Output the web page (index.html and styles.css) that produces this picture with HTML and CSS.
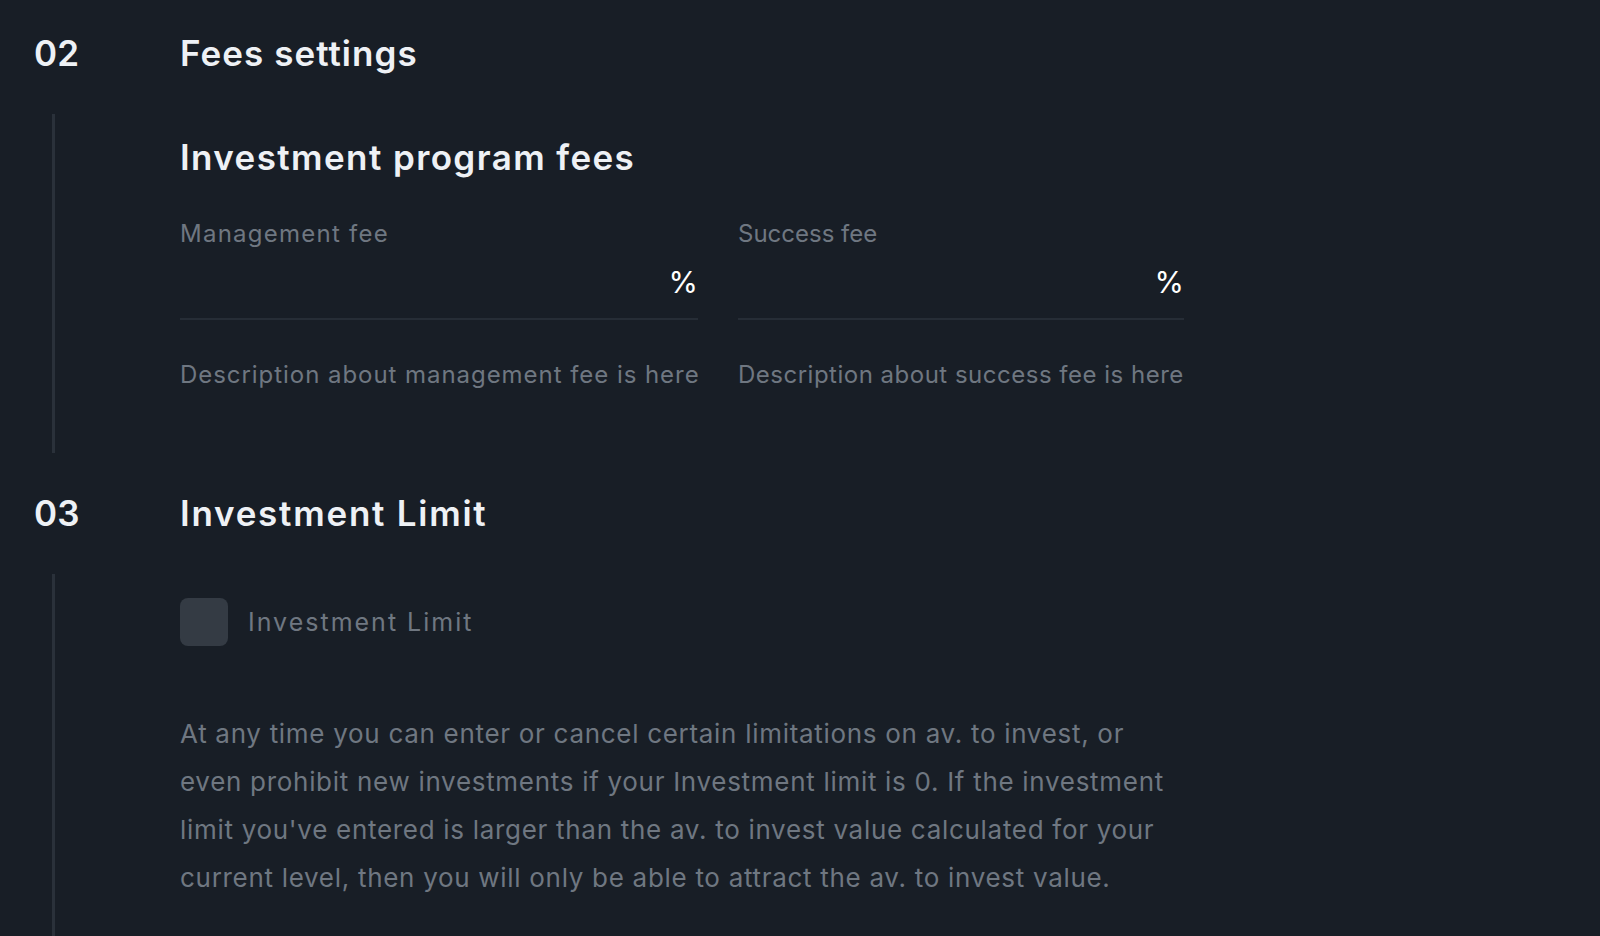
FILE: index.html
```html
<!DOCTYPE html>
<html lang="en">
<head>
<meta charset="utf-8">
<title>Fees settings</title>
<link rel="stylesheet" href="styles.css">
</head>
<body>
<main class="page">
  <section class="section">
    <header class="section-head">
      <span class="section-num">02</span>
      <h2 class="section-title section-title--fees">Fees settings</h2>
    </header>
    <div class="section-body section-body--fees">
      <h3 class="sub-title">Investment program fees</h3>
      <div class="fields">
        <div class="field field--mgmt">
          <label class="field-label">Management fee</label>
          <div class="field-input">
            <input class="field-control" type="text" value="">
            <span class="field-suffix">%</span>
          </div>
          <div class="field-desc">Description about management fee is here</div>
        </div>
        <div class="field field--success">
          <label class="field-label">Success fee</label>
          <div class="field-input">
            <input class="field-control" type="text" value="">
            <span class="field-suffix">%</span>
          </div>
          <div class="field-desc">Description about success fee is here</div>
        </div>
      </div>
    </div>
  </section>
  <section class="section">
    <header class="section-head">
      <span class="section-num">03</span>
      <h2 class="section-title section-title--limit">Investment Limit</h2>
    </header>
    <div class="section-body section-body--limit">
      <label class="check-row">
        <span class="check-box"></span>
        <span class="check-label">Investment Limit</span>
      </label>
      <p class="limit-text">At any time you can enter or cancel certain limitations on av. to invest, or<br>even prohibit new investments if your Investment limit is 0. If the investment<br>limit you've entered is larger than the av. to invest value calculated for your<br>current level, then you will only be able to attract the av. to invest value.</p>
    </div>
  </section>
</main>
</body>
</html>
```

FILE: styles.css
```css
* { box-sizing: border-box; }

html, body {
  margin: 0;
  padding: 0;
  background: #181e26;
  height: 100%;
  overflow: hidden;
}

body {
  font-family: Inter, "Noto Sans", "DejaVu Sans", sans-serif;
  color: #eef1f5;
}

.page {
  padding: 31px 0 0 34px;
}

.section + .section {
  margin-top: 38px;
}

.section-head {
  display: flex;
  align-items: baseline;
}

.section-num {
  width: 146px;
  flex: none;
  font-size: 35px;
  line-height: 44px;
  font-weight: 600;
  letter-spacing: 0.2px;
  color: #eef1f5;
}

.section-title {
  margin: 0;
  font-size: 35px;
  line-height: 44px;
  font-weight: 600;
  letter-spacing: 1.3px;
  color: #eef1f5;
}

.section-title--fees { letter-spacing: 1.05px; }
.section-title--limit { letter-spacing: 1.75px; }

.section-body {
  margin-top: 39px;
  margin-left: 18px;
  border-left: 3px solid #2a313a;
  padding-left: 125px;
  width: 1150px;
}

.section-body--fees {
  padding-top: 21px;
  padding-bottom: 63px;
}

.section-body--limit {
  padding-top: 24px;
  padding-bottom: 60px;
}

.sub-title {
  margin: 0;
  font-size: 35px;
  line-height: 44px;
  font-weight: 600;
  letter-spacing: 1.4px;
  color: #eef1f5;
}

.fields {
  display: flex;
  gap: 40px;
  margin-top: 40px;
}

.field--mgmt { width: 518px; }
.field--success { width: 446px; }

.field-label {
  display: block;
  font-size: 24px;
  line-height: 30px;
  color: #6f7781;
  letter-spacing: 0.8px;
}

.field--mgmt .field-label { letter-spacing: 1.25px; }
.field--success .field-label { letter-spacing: 0; }

.field-input {
  display: flex;
  align-items: center;
  padding: 15px 0 18px;
  border-bottom: 2px solid #262d36;
}

.field-control {
  flex: 1;
  min-width: 0;
  background: transparent;
  border: 0;
  outline: none;
  padding: 0;
  height: 36px;
  font-family: inherit;
  font-size: 30px;
  color: #ffffff;
}

.field-suffix {
  font-size: 30px;
  line-height: 36px;
  color: #ffffff;
}

.field-desc {
  margin-top: 40px;
  font-size: 24px;
  line-height: 30px;
  color: #6f7781;
  letter-spacing: 0.75px;
  white-space: nowrap;
}

.field--mgmt .field-desc { letter-spacing: 0.95px; }
.field--success .field-desc { letter-spacing: 0.5px; }

.check-row {
  display: flex;
  align-items: center;
  gap: 20px;
}

.check-box {
  width: 48px;
  height: 48px;
  border-radius: 8px;
  background: #343b44;
  flex: none;
}

.check-label {
  font-size: 25px;
  line-height: 30px;
  color: #6f7781;
  letter-spacing: 2px;
}

.limit-text {
  margin: 64px 0 0;
  font-size: 26px;
  line-height: 48px;
  color: #6f7781;
  letter-spacing: 0.7px;
  white-space: nowrap;
}
```
